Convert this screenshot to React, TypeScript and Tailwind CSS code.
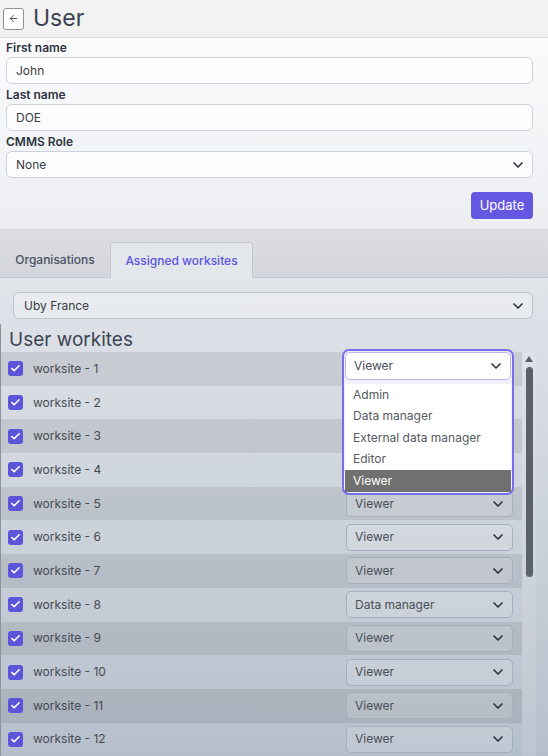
import { ArrowLeft, Check, ChevronDown } from "lucide-react";

const roles = ["Admin", "Data manager", "External data manager", "Editor", "Viewer"];

const worksites = [
	{ name: "worksite - 1", role: "Viewer" },
	{ name: "worksite - 2", role: "Viewer" },
	{ name: "worksite - 3", role: "Viewer" },
	{ name: "worksite - 4", role: "Viewer" },
	{ name: "worksite - 5", role: "Viewer" },
	{ name: "worksite - 6", role: "Viewer" },
	{ name: "worksite - 7", role: "Viewer" },
	{ name: "worksite - 8", role: "Data manager" },
	{ name: "worksite - 9", role: "Viewer" },
	{ name: "worksite - 10", role: "Viewer" },
	{ name: "worksite - 11", role: "Viewer" },
	{ name: "worksite - 12", role: "Viewer" },
];

function Field({ label, value, select }: { label: string; value: string; select?: boolean }) {
	return (
		<div className="flex flex-col">
			<label className="h-[16px] text-[12px] leading-[16px] font-semibold text-[#2f3441]">{label}</label>
			<div className="mt-[1px] flex h-[27px] items-center justify-between rounded-[6px] border border-[#cdd3dc] bg-white/80 pl-[9px] pr-[6px] text-[12px] text-[#3a3d45]">
				<span>{value}</span>
				{select && <ChevronDown size={16} strokeWidth={2.5} className="text-[#2c3240]" />}
			</div>
		</div>
	);
}

function RoleSelect({ role, hidden }: { role: string; hidden?: boolean }) {
	return (
		<div
			className={
				hidden
					? "invisible flex h-[27px] w-[167px] items-center justify-between rounded-[5px] border border-[#a3afbf] bg-white/15 pl-[8px] pr-[6px] text-[12px] text-[#4a4f58]"
					: "flex h-[27px] w-[167px] items-center justify-between rounded-[5px] border border-[#a3afbf] bg-white/15 pl-[8px] pr-[6px] text-[12px] text-[#4a4f58]"
			}
		>
			<span>{role}</span>
			<ChevronDown size={16} strokeWidth={2.5} className="text-[#2c3240]" />
		</div>
	);
}

function OpenSelect() {
	return (
		<div className="absolute left-[341px] top-[-3px] z-10 w-[172px] rounded-[7px] border-2 border-[#7a6cec] bg-[#f1f0fc] p-[1px]">
			<div className="flex h-[28px] items-center justify-between rounded-[5px] border border-[#bdb5f4] bg-white pl-[8px] pr-[6px] text-[12px] text-[#4a4f58]">
				<span>Viewer</span>
				<ChevronDown size={16} strokeWidth={2.5} className="text-[#2c3240]" />
			</div>
			<ul className="mt-[4px] bg-white">
				{roles.map((r) => (
					<li
						key={r}
						className={
							r === "Viewer"
								? "flex h-[21.5px] items-center bg-[#707070] pl-[8px] text-[12px] text-white"
								: "flex h-[21.5px] items-center pl-[8px] text-[12px] text-[#555a62]"
						}
					>
						{r}
					</li>
				))}
			</ul>
		</div>
	);
}

export default function App() {
	return (
		<div className="h-[756px] w-[548px] overflow-hidden bg-[#f2f2f3] font-['Inter',sans-serif]">
			{/* header */}
			<div className="flex h-[38px] items-center gap-[9px] border-b border-[#dcdde1] pl-[3px]">
				<button className="flex h-[22px] w-[21px] items-center justify-center rounded-[3px] border border-[#8f9196] bg-white">
					<ArrowLeft size={11} strokeWidth={2} className="text-[#444]" />
				</button>
				<h1 className="text-[23px] leading-none text-[#3c4150]">User</h1>
			</div>

			{/* form */}
			<div className="border-b border-[#d7d9de] bg-gradient-to-b from-[#fbfbfc] to-[#eceef1] pb-[10px] pt-[2px]">
				<div className="ml-[6px] flex w-[527px] flex-col gap-[3px]">
					<Field label="First name" value="John" />
					<Field label="Last name" value="DOE" />
					<Field label="CMMS Role" value="None" select />
				</div>
				<div className="ml-[6px] mt-[14px] flex w-[527px] justify-end">
					<button className="h-[27px] w-[62px] rounded-[4px] bg-[#6657e3] text-[13px] text-white">Update</button>
				</div>
			</div>

			{/* tabs */}
			<div className="flex h-[48px] items-end border-b border-[#c4c8cf] bg-gradient-to-b from-[#dcdde1] to-[#d3d6dc]">
				<div className="flex h-[35px] w-[110px] items-center justify-center text-[12px] font-medium text-[#4b5162]">
					Organisations
				</div>
				<div className="-mb-px flex h-[36px] w-[143px] items-center justify-center rounded-t-[3px] border border-b-0 border-[#c4c9d1] bg-[#e3e6eb] text-[12px] font-medium text-[#5a55e2]">
					Assigned worksites
				</div>
			</div>

			{/* content */}
			<div className="h-[479px] bg-gradient-to-b from-[#e1e4e9] via-[#cdd3db] to-[#b5bfcb]">
				<div className="ml-[13px] w-[520px] pt-[14px]">
					<div className="flex h-[27px] items-center justify-between rounded-[6px] border border-[#bcc4d0] bg-white/30 pl-[10px] pr-[6px] text-[12px] text-[#3a3d45]">
						<span>Uby France</span>
						<ChevronDown size={16} strokeWidth={2.5} className="text-[#2c3240]" />
					</div>
				</div>

				<div className="mt-[5px] w-[536px] border-l border-[#8d939c]">
					<h2 className="h-[28px] pl-[8px] pt-[3px] text-[19px] leading-[25px] text-[#3d4454]">User workites</h2>
					<div className="flex">
						<div className="flex-1">
							{worksites.map((w, i) => (
								<div
									key={w.name}
									className={
										i % 2 === 0
											? "relative flex h-[33.7px] items-center justify-between bg-black/[0.08] pl-[7px] pr-[9px]"
											: "relative flex h-[33.7px] items-center justify-between pl-[7px] pr-[9px]"
									}
								>
									<div className="flex items-center gap-[10px]">
										<span className="flex h-[15px] w-[15px] items-center justify-center rounded-[3px] bg-[#5d55d9]">
											<Check size={11} strokeWidth={3.5} className="text-white" />
										</span>
										<span className="text-[12px] text-[#464a52]">{w.name}</span>
									</div>
									{/* rows 1-4 sit under the open dropdown */}
									<RoleSelect role={w.role} hidden={i < 4} />
									{i === 0 && <OpenSelect />}
								</div>
							))}
						</div>
						{/* scrollbar */}
						<div className="flex w-[14px] flex-col items-center bg-white/10 pt-[4px]">
							<svg width="8" height="6" viewBox="0 0 8 6" className="fill-[#5b6069]">
								<path d="M4 0 L8 6 L0 6 Z" />
							</svg>
							<div className="mt-[5px] h-[210px] w-[7px] rounded-full bg-[#5b6069]" />
						</div>
					</div>
				</div>
			</div>
		</div>
	);
}
